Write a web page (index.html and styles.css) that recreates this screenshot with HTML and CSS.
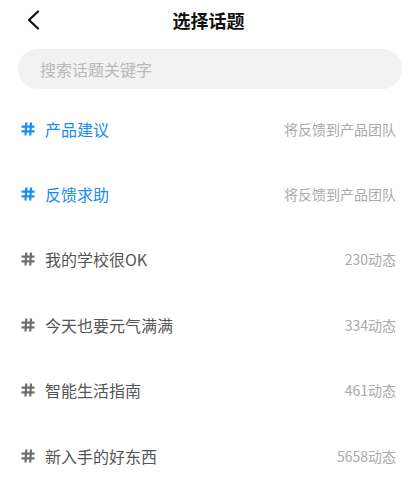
FILE: index.html
```html
<!DOCTYPE html>
<html lang="zh">
<head>
<meta charset="utf-8">
<link rel="stylesheet" href="styles.css">
</head>
<body>
<div class="page">
  <header class="header">
    <div class="back">
      <svg width="14" height="20" viewBox="0 0 14 20"><path d="M11 1.5 L2 10 L11 18.5" fill="none" stroke="#111" stroke-width="2.2" stroke-linecap="round" stroke-linejoin="round"/></svg>
    </div>
    <div class="title">选择话题</div>
    <div></div>
  </header>
  <div class="search">搜索话题关键字</div>
  <ul class="list">
    <li class="row official"><span class="hash"><svg width="14" height="14" viewBox="0 0 14 14"><path d="M5.3 0.5 L4.5 13.5 M10 0.5 L9.2 13.5 M0.5 4.6 H13.5 M0.5 9.4 H13.5" stroke="currentColor" stroke-width="2.2" fill="none"/></svg></span><span class="name">产品建议</span><span class="meta">将反馈到产品团队</span></li>
    <li class="row official"><span class="hash"><svg width="14" height="14" viewBox="0 0 14 14"><path d="M5.3 0.5 L4.5 13.5 M10 0.5 L9.2 13.5 M0.5 4.6 H13.5 M0.5 9.4 H13.5" stroke="currentColor" stroke-width="2.2" fill="none"/></svg></span><span class="name">反馈求助</span><span class="meta">将反馈到产品团队</span></li>
    <li class="row"><span class="hash"><svg width="14" height="14" viewBox="0 0 14 14"><path d="M5.3 0.5 L4.5 13.5 M10 0.5 L9.2 13.5 M0.5 4.6 H13.5 M0.5 9.4 H13.5" stroke="currentColor" stroke-width="2.2" fill="none"/></svg></span><span class="name">我的学校很OK</span><span class="meta">230动态</span></li>
    <li class="row"><span class="hash"><svg width="14" height="14" viewBox="0 0 14 14"><path d="M5.3 0.5 L4.5 13.5 M10 0.5 L9.2 13.5 M0.5 4.6 H13.5 M0.5 9.4 H13.5" stroke="currentColor" stroke-width="2.2" fill="none"/></svg></span><span class="name">今天也要元气满满</span><span class="meta">334动态</span></li>
    <li class="row"><span class="hash"><svg width="14" height="14" viewBox="0 0 14 14"><path d="M5.3 0.5 L4.5 13.5 M10 0.5 L9.2 13.5 M0.5 4.6 H13.5 M0.5 9.4 H13.5" stroke="currentColor" stroke-width="2.2" fill="none"/></svg></span><span class="name">智能生活指南</span><span class="meta">461动态</span></li>
    <li class="row"><span class="hash"><svg width="14" height="14" viewBox="0 0 14 14"><path d="M5.3 0.5 L4.5 13.5 M10 0.5 L9.2 13.5 M0.5 4.6 H13.5 M0.5 9.4 H13.5" stroke="currentColor" stroke-width="2.2" fill="none"/></svg></span><span class="name">新入手的好东西</span><span class="meta">5658动态</span></li>
  </ul>
</div>
</body>
</html>
```
FILE: styles.css
```css
* { box-sizing: border-box; }
html, body { margin: 0; padding: 0; background: #fff; }
body {
  font-family: "Noto Sans CJK SC", "Noto Sans", sans-serif;
  color: #333;
}
.page { width: 417px; }
.header {
  height: 40px;
  display: grid;
  grid-template-columns: 1fr auto 1fr;
  align-items: center;
}
.back {
  padding-left: 27px;
  display: flex;
  align-items: center;
  height: 40px;
}
.back svg { display: block; }
.title {
  font-size: 18px;
  font-weight: 700;
  color: #111;
  line-height: 40px;
}
.search {
  margin: 9px 15px 0 18px;
  height: 40px;
  border-radius: 20px;
  background: #f2f2f2;
  color: #b8b8b8;
  font-size: 16px;
  line-height: 40px;
  padding-left: 22px;
}
.list {
  list-style: none;
  margin: 0;
  padding: 7px 0 0 0;
}
.row {
  height: 65.4px;
  display: flex;
  align-items: center;
  padding: 0 21px 0 21px;
}
.hash {
  width: 24px;
  display: flex;
  align-items: center;
  color: #6e6e6e;
}
.hash svg { display: block; }
.name {
  flex: 1;
  font-size: 16px;
  color: #555;
}
.meta {
  font-size: 14px;
  color: #aaa;
}
.official .hash, .official .name { color: #1a8cf0; }
```
